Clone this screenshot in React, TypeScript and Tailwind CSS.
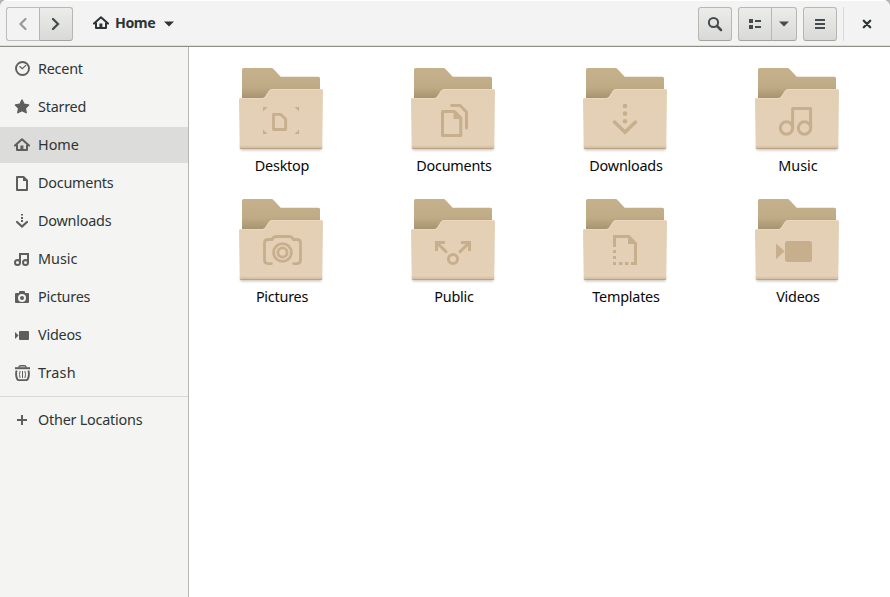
import type { ReactNode } from "react";

const sans = "font-['Noto_Sans','Open_Sans',sans-serif]";

function HomeGlyph() {
  return (
    <g stroke="currentColor" fill="none">
      <path d="M1 8.600 8 2.200l7 6.400" strokeWidth="2" strokeLinecap="round" strokeLinejoin="round" />
      <path d="M3 7.500V13h10V7.500" strokeWidth="2" strokeLinejoin="round" />
      <path d="M7.900 8.500V13" strokeWidth="3" />
    </g>
  );
}

const places: { name: string; glyph: ReactNode }[] = [
  {
    name: "Recent",
    glyph: (
      <g fill="none" stroke="currentColor">
        <circle cx="8.5" cy="7.5" r="6.5" strokeWidth="1.9" />
        <path d="m5.5 5.2 2.8 2.5 3.8-3.6" strokeWidth="1.2" />
      </g>
    ),
  },
  {
    name: "Starred",
    glyph: (
      <path d="m8 1 2.1 4.3 4.5.6-3.3 3.3.9 4.5L8 11.6l-4.2 2.1.9-4.5-3.3-3.3 4.5-.6z" fill="currentColor" stroke="currentColor" strokeWidth="1.4" strokeLinejoin="round" />
    ),
  },
  { name: "Home", glyph: <HomeGlyph /> },
  {
    name: "Documents",
    glyph: (
      <>
        <path d="M3 2h6.5L13 5.5V15H3z" fill="none" stroke="currentColor" strokeWidth="2" strokeLinejoin="round" />
        <path d="M9 2v4h4z" fill="currentColor" />
      </>
    ),
  },
  {
    name: "Downloads",
    glyph: (
      <>
        <path d="M7 1h2v1.500H7zM7 4h2v2H7zM7 7h2v2H7z" fill="currentColor" />
        <path d="m3 9 5 4.500L13 9" fill="none" stroke="currentColor" strokeWidth="2.200" strokeLinecap="round" />
      </>
    ),
  },
  {
    name: "Music",
    glyph: (
      <g fill="none" stroke="currentColor" strokeWidth="2">
        <circle cx="3.500" cy="11.500" r="2.500" />
        <circle cx="11.500" cy="11.500" r="2.500" />
        <path d="M6 12V3h8v9" />
      </g>
    ),
  },
  {
    name: "Pictures",
    glyph: (
      <>
        <path d="M2 4h3V3q0-1 1-1h4q1 0 1 1v1h3q1 0 1 1v8q0 1-1 1H2q-1 0-1-1V5q0-1 1-1z" fill="currentColor" />
        <circle cx="8" cy="9" r="3" fill="none" stroke="#f4f4f2" strokeWidth="2" />
      </>
    ),
  },
  {
    name: "Videos",
    glyph: <path d="M6 4h8q1 0 1 1v7q0 1-1 1H6q-1 0-1-1V5q0-1 1-1zM1 5l3.600 3.500L1 12z" fill="currentColor" />,
  },
  {
    name: "Trash",
    glyph: (
      <g fill="none" stroke="currentColor">
        <path d="M1 3.200h15" strokeWidth="2" />
        <path d="M4.800 2.500Q5 .8 7 .8h3q2 0 2.200 1.700" strokeWidth="1.500" />
        <path d="M2.600 5.500q-1.300 4.500.6 8.700.4.900 1.700.9h7.200q1.300 0 1.700-.9 1.900-4.200.6-8.700" strokeWidth="1.900" />
        <path d="M6.100 6q-1.300 3.500 0 7M8.500 6v7M10.900 6q1.300 3.500 0 7" strokeWidth="1" />
      </g>
    ),
  },
];

const folders: { name: string; emblem: ReactNode }[] = [
  {
    name: "Desktop",
    emblem: (
      <>
        <path d="M30 45h4.500L30 49.500zM66 45h-4.500l4.500 4.500zM30 72h4.500L30 67.500zM66 72h-4.500l4.500-4.500z" fill="currentColor" />
        <path d="M40.500 52.300h7.200l5 5V67.500H40.500z" fill="none" stroke="currentColor" strokeWidth="2.800" strokeLinejoin="round" />
      </>
    ),
  },
  {
    name: "Documents",
    emblem: (
      <>
        <path d="M37.500 49.500h12l6.300 6.300v17.700H37.500z" fill="none" stroke="currentColor" strokeWidth="3" strokeLinejoin="round" />
        <path d="M48.500 49v8h8z" fill="currentColor" />
        <path d="M46.500 43.500H55l6.500 6.500v16" fill="none" stroke="currentColor" strokeWidth="3" strokeLinecap="round" />
      </>
    ),
  },
  {
    name: "Downloads",
    emblem: (
      <>
        <g fill="currentColor">
          <circle cx="48" cy="44" r="2.300" />
          <circle cx="48" cy="51.600" r="2.300" />
          <circle cx="48" cy="59.200" r="2.300" />
        </g>
        <path d="M37.500 60 48 70.300 58.500 60" fill="none" stroke="currentColor" strokeWidth="3.500" strokeLinecap="round" />
      </>
    ),
  },
  {
    name: "Music",
    emblem: (
      <g fill="none" stroke="currentColor" strokeWidth="3">
        <circle cx="37.500" cy="66" r="6.200" />
        <circle cx="55.500" cy="66" r="6.200" />
        <path d="M43.600 66V46.500h18V66" strokeLinejoin="round" />
      </g>
    ),
  },
  {
    name: "Pictures",
    emblem: (
      <g fill="none" stroke="currentColor" strokeWidth="2.800" transform="translate(0 -2)">
        <path d="M38.500 72.600H35q-3.500 0-3.500-3.500V52q0-3.500 3.500-3.500h4q1.500-3 4.500-3H56q3 0 4.500 3h3.500q3.500 0 3.500 3.500v17.100q0 3.500-3.500 3.500h-3.500" strokeLinecap="round" />
        <circle cx="49.500" cy="61.500" r="8.900" />
        <circle cx="49.500" cy="61.500" r="4.600" />
      </g>
    ),
  },
  {
    name: "Public",
    emblem: (
      <g transform="translate(0 -2)">
        <path d="M30 50h10v3H33v7h-3zM66 50H56v3h7v7h3z" fill="currentColor" />
        <g fill="none" stroke="currentColor" strokeWidth="3">
          <path d="M31.500 51.500 41 60.700M64.500 51.500 55 60.700" strokeLinecap="round" />
          <circle cx="48" cy="68" r="4.600" />
        </g>
      </g>
    ),
  },
  {
    name: "Templates",
    emblem: (
      <g transform="translate(0 -2)">
        <path d="M37.500 56V45.500h14.300l6.700 7V72.500H54" fill="none" stroke="currentColor" strokeWidth="3" />
        <path d="M51 45v8h8zM36 59h3v3h-3zM36 65h3v3h-3zM36 71h3v3h-3zM42 71h3.500v3H42zM48 71h3.500v3H48z" fill="currentColor" />
      </g>
    ),
  },
  {
    name: "Videos",
    emblem: <path transform="translate(0 -2)" d="M38.500 50h22q2.500 0 2.500 2.500v16q0 2.500-2.500 2.500h-22q-2.500 0-2.500-2.500v-16q0-2.500 2.500-2.500zM27 52.500v15.700l8.700-7.900z" fill="currentColor" />,
  },
];

// Short labels keep looser letter spacing than the rest.
function spacing(name: string) {
  if (name === "Trash") return "tracking-[0.2px]";
  if (name === "Music" || name === "Home") return "tracking-normal";
  return "tracking-[-0.23px]";
}

function Row({ name, active, children }: { name: string; active?: boolean; children: ReactNode }) {
  return (
    <li className={active ? "flex h-9 items-center gap-2 bg-[#dcdcdb] pl-3.5" : "flex h-9 items-center gap-2 pl-3.5"}>
      <svg className="size-4 shrink-0 text-[#5e5e5e]" viewBox="0 0 16 16">{children}</svg>
      <span className={spacing(name)}>{name}</span>
    </li>
  );
}

function Folder({ name, emblem }: { name: string; emblem: ReactNode }) {
  return (
    <figure className="flex h-[131px] flex-col items-center">
      <svg className="size-24 shrink-0 text-[#c7af8e]" viewBox="0 0 96 96">
        <path d="M9 38V7.500Q9 6 10.500 6h28q1.200 0 2.200 1.200l7 7.600h37.800q1.500 0 1.500 1.500V40H9z" fill="url(#folderBack)" />
        <path d="M7 84h82v2q0 2.500-2 2.500H9q-2 0-2-2.500z" fill="#776a5a" opacity=".35" filter="url(#soft)" />
        <path d="M6 38v-.5Q6 36 7.500 36H29q2 0 3-1.500l4-6q1-1.500 3-1.500h49.300Q90 27 90 28.700L89.300 85q0 2-2 2H8.700q-2 0-2-2z" fill="url(#folderFront)" />
        <path d="M6.800 86q.3 1 1.900 1h78.600q1.600 0 1.900-1z" fill="#bca284" />
        <path d="M7 36.600h22q2.500 0 3.500-1.600l4-6q1-1.400 2.600-1.400h50" fill="none" stroke="#eddac4" strokeWidth=".8" />
        {emblem}
      </svg>
      <figcaption className={`-mt-[3px] pl-0.5 leading-[22px] text-[#080808] ${spacing(name)}`}>{name}</figcaption>
    </figure>
  );
}

const raised = "border border-[#b8b8b3] border-b-[#a4a49f] bg-linear-to-b from-[#ececea] to-[#d9d9d7]";

export default function App() {
  return (
    <div className="h-[597px] w-[890px] bg-[#b4b4b0]">
      <div className={`${sans} flex h-full flex-col overflow-hidden rounded-t-[7px] bg-white text-[14.4px] text-[#2e3436]`}>
        <svg className="absolute size-0">
          <defs>
            <linearGradient id="folderBack" x1="0" y1="0" x2="0" y2="1">
              <stop offset="0" stopColor="#c5b18b" />
              <stop offset=".55" stopColor="#bfac87" />
              <stop offset=".9" stopColor="#a5936f" />
            </linearGradient>
            <linearGradient id="folderFront" x1="0" y1="0" x2="0" y2="1">
              <stop offset="0" stopColor="#e4cfb3" />
              <stop offset=".93" stopColor="#e3d1b8" />
              <stop offset="1" stopColor="#d2b796" />
            </linearGradient>
            <filter id="soft" x="-10%" y="-100%" width="120%" height="300%">
              <feGaussianBlur stdDeviation="1.2" />
            </filter>
          </defs>
        </svg>

        <header className="flex h-[47px] shrink-0 items-center border-t border-b border-t-white border-b-[#8e8e87] bg-[#f3f3f3] px-1.5 text-[#2e3436] shadow-[inset_0_-1px_#dededb]">
          <div className="flex h-[34px] w-[67px]">
            <button className="flex w-[33px] items-center justify-center rounded-l-[3px] border border-r-0 border-[#bcbcb8] bg-[#f3f3f3]">
              <svg className="size-4 text-[#989a99]" viewBox="0 0 16 16"><path d="M10.500 3 5.500 8l5 5" fill="none" stroke="currentColor" strokeWidth="2.200" strokeLinecap="round" /></svg>
            </button>
            <button className={`flex w-[34px] items-center justify-center rounded-r-[3px] ${raised}`}>
              <svg className="size-4 text-[#464b4d]" viewBox="0 0 16 16"><path d="m5 3 5 5-5 5" fill="none" stroke="currentColor" strokeWidth="2.300" strokeLinecap="round" /></svg>
            </button>
          </div>
          <button className="ml-5 flex items-center">
            <svg className="size-4" viewBox="0 0 16 16"><HomeGlyph /></svg>
            <span className="-mt-px ml-1.5 w-10 text-[14.2px] font-bold tracking-[-0.45px] whitespace-nowrap">Home</span>
            <svg className="mt-px ml-[9px] h-1.5 w-[10px]" viewBox="0 0 10 6"><path d="M0 .5h10L5 5.500z" fill="currentColor" /></svg>
          </button>
          <div className="ml-auto flex h-[34px] items-stretch text-[#464b4d]">
            <button className={`flex w-[34px] items-center justify-center rounded-[3px] ${raised}`}>
              <svg className="size-4" viewBox="0 0 16 16" fill="none" stroke="currentColor"><circle cx="6.500" cy="6.500" r="4.600" strokeWidth="2" /><path d="m10 10 4 4" strokeWidth="2.500" strokeLinecap="round" /></svg>
            </button>
            <button className={`ml-1.5 flex w-[34px] items-center justify-center rounded-l-[3px] ${raised}`}>
              <svg className="size-4" viewBox="0 0 16 16" fill="currentColor"><path d="M2 3h4v4H2zM2 9h4v4H2zM8 4h6v2H8zM8 10h6v2H8z" /></svg>
            </button>
            <button className={`-ml-px flex w-[26px] items-center justify-center rounded-r-[3px] ${raised}`}>
              <svg className="h-1.5 w-[10px]" viewBox="0 0 10 6"><path d="M0 .5h10L5 5.500z" fill="currentColor" /></svg>
            </button>
            <button className={`ml-1.5 flex w-[34px] items-center justify-center rounded-[3px] ${raised}`}>
              <svg className="size-4" viewBox="0 0 16 16" fill="currentColor"><path d="M3 3h10v2H3zM3 7h10v2H3zM3 11h10v2H3z" /></svg>
            </button>
            <span className="ml-1.5 w-px bg-[#d9d9d7]" />
            <button className="ml-[15px] mr-[9px] flex w-4 items-center justify-center text-[#2e3436]">
              <svg className="size-4" viewBox="0 0 16 16"><path d="m4.800 4.800 6.400 6.400M11.200 4.800l-6.400 6.400" stroke="currentColor" strokeWidth="2.300" strokeLinecap="round" /></svg>
            </button>
          </div>
        </header>

        <div className="flex min-h-0 flex-1">
          <nav className="w-[189px] shrink-0 border-r border-[#b6b6b2] bg-[#f4f4f2] pt-1">
            <ul className="flex flex-col gap-0.5">
              {places.map((p) => (
                <Row key={p.name} name={p.name} active={p.name === "Home"}>{p.glyph}</Row>
              ))}
            </ul>
            <hr className="mt-[5px] mb-[5px] border-[#d8d8d5]" />
            <ul>
              <Row name="Other Locations"><path d="M3 8h10M8 3v10" stroke="currentColor" strokeWidth="2" /></Row>
            </ul>
          </nav>
          <main className="grid flex-1 auto-rows-[131px] grid-cols-[repeat(4,172px)] content-start pt-[15px] pl-1.5">
            {folders.map((f) => (
              <Folder key={f.name} {...f} />
            ))}
          </main>
        </div>
      </div>
    </div>
  );
}
